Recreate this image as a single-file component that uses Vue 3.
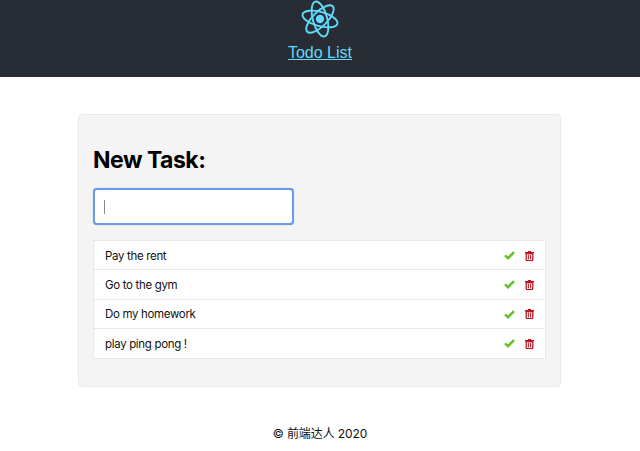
<script setup>
const tasks = ['Pay the rent', 'Go to the gym', 'Do my homework', 'play ping pong !']
</script>

<template>
  <div class="page">
    <header class="top">
      <svg class="logo" viewBox="-12 -12 24 24" width="40" height="40" fill="none" stroke="#61dafb" stroke-width="1.15">
        <circle r="2.5" fill="#61dafb" stroke="none" />
        <g transform="rotate(15)">
          <ellipse rx="10.8" ry="4.3" />
          <ellipse rx="10.8" ry="4.3" transform="rotate(60)" />
          <ellipse rx="10.8" ry="4.3" transform="rotate(120)" />
        </g>
      </svg>
      <a class="title" href="#">Todo List</a>
    </header>
    <main class="card">
      <h2 class="heading">New Task:</h2>
      <div class="input"><span class="caret"></span></div>
      <ul class="list">
        <li v-for="t in tasks" :key="t" class="row">
          <span class="label">{{ t }}</span>
          <svg class="check" viewBox="0 0 11 9" width="11" height="9">
            <path d="M1 4.4 L4 7.2 L10 1.2" fill="none" stroke="#6cbf2a" stroke-width="2.6" />
          </svg>
          <svg class="trash" viewBox="0 0 9 10" width="9" height="10">
            <path d="M3 1V.1h3V1h3v1.2H0V1z" fill="#bd1520" />
            <path d="M1.2 2.6h6.6v6a1 1 0 0 1-1 1H2.2a1 1 0 0 1-1-1z" fill="none" stroke="#bd1520" stroke-width="1.3" />
            <path d="M3.4 3.6v4.8M5.6 3.6v4.8" stroke="#bd1520" stroke-width="1" />
          </svg>
        </li>
      </ul>
    </main>
    <footer class="foot">© 前端达人 2020</footer>
  </div>
</template>

<style>
html, body { margin: 0; background: #fff; }
</style>

<style scoped>
.page {
  width: 640px;
  height: 451px;
  overflow: hidden;
  font-family: Inter, "Noto Sans CJK SC", sans-serif;
  color: #111;
}
.top {
  height: 77px;
  background: #282c34;
  display: flex;
  flex-direction: column;
  align-items: center;
  box-sizing: border-box;
}
.logo { display: block; margin-top: -1px; }
.title {
  margin-top: 4px;
  font-family: "Liberation Sans", sans-serif;
  font-size: 16px;
  line-height: 20px;
  color: #61dafb;
  text-decoration: underline;
}
.card {
  box-sizing: border-box;
  width: 483px;
  height: 273px;
  margin: 37px 0 0 78px;
  padding: 30px 14px 0;
  background: #f4f4f4;
  border: 1px solid #e9e9e9;
  border-radius: 4px;
}
.heading {
  margin: 0;
  font-size: 23px;
  line-height: 30px;
  font-weight: 700;
  color: #000;
  letter-spacing: -0.5px;
}
.input {
  box-sizing: border-box;
  width: 201px;
  height: 37px;
  margin-top: 13px;
  padding: 10px 0 0 9px;
  background: #fff;
  border: 2px solid #659ced;
  border-radius: 4px;
  box-shadow: 0 0 1px #659ced;
}
.caret {
  display: block;
  width: 1px;
  height: 14px;
  background: #888;
}
.list {
  list-style: none;
  margin: 15px 0 0;
  padding: 0;
  border: 1px solid #e9e9e9;
  background: #fff;
}
.row {
  display: flex;
  align-items: center;
  box-sizing: border-box;
  height: 29.25px;
  padding: 1px 11px 0;
  font-size: 11.5px;
  letter-spacing: -0.33px;
  border-bottom: 1px solid #e9e9e9;
}
.row:last-child { border-bottom: none; }
.label { flex: 1; }
.check { margin-right: 10px; }
.foot {
  margin-top: 38px;
  text-align: center;
  font-size: 12px;
  line-height: 18px;
  letter-spacing: -0.1px;
}
</style>
